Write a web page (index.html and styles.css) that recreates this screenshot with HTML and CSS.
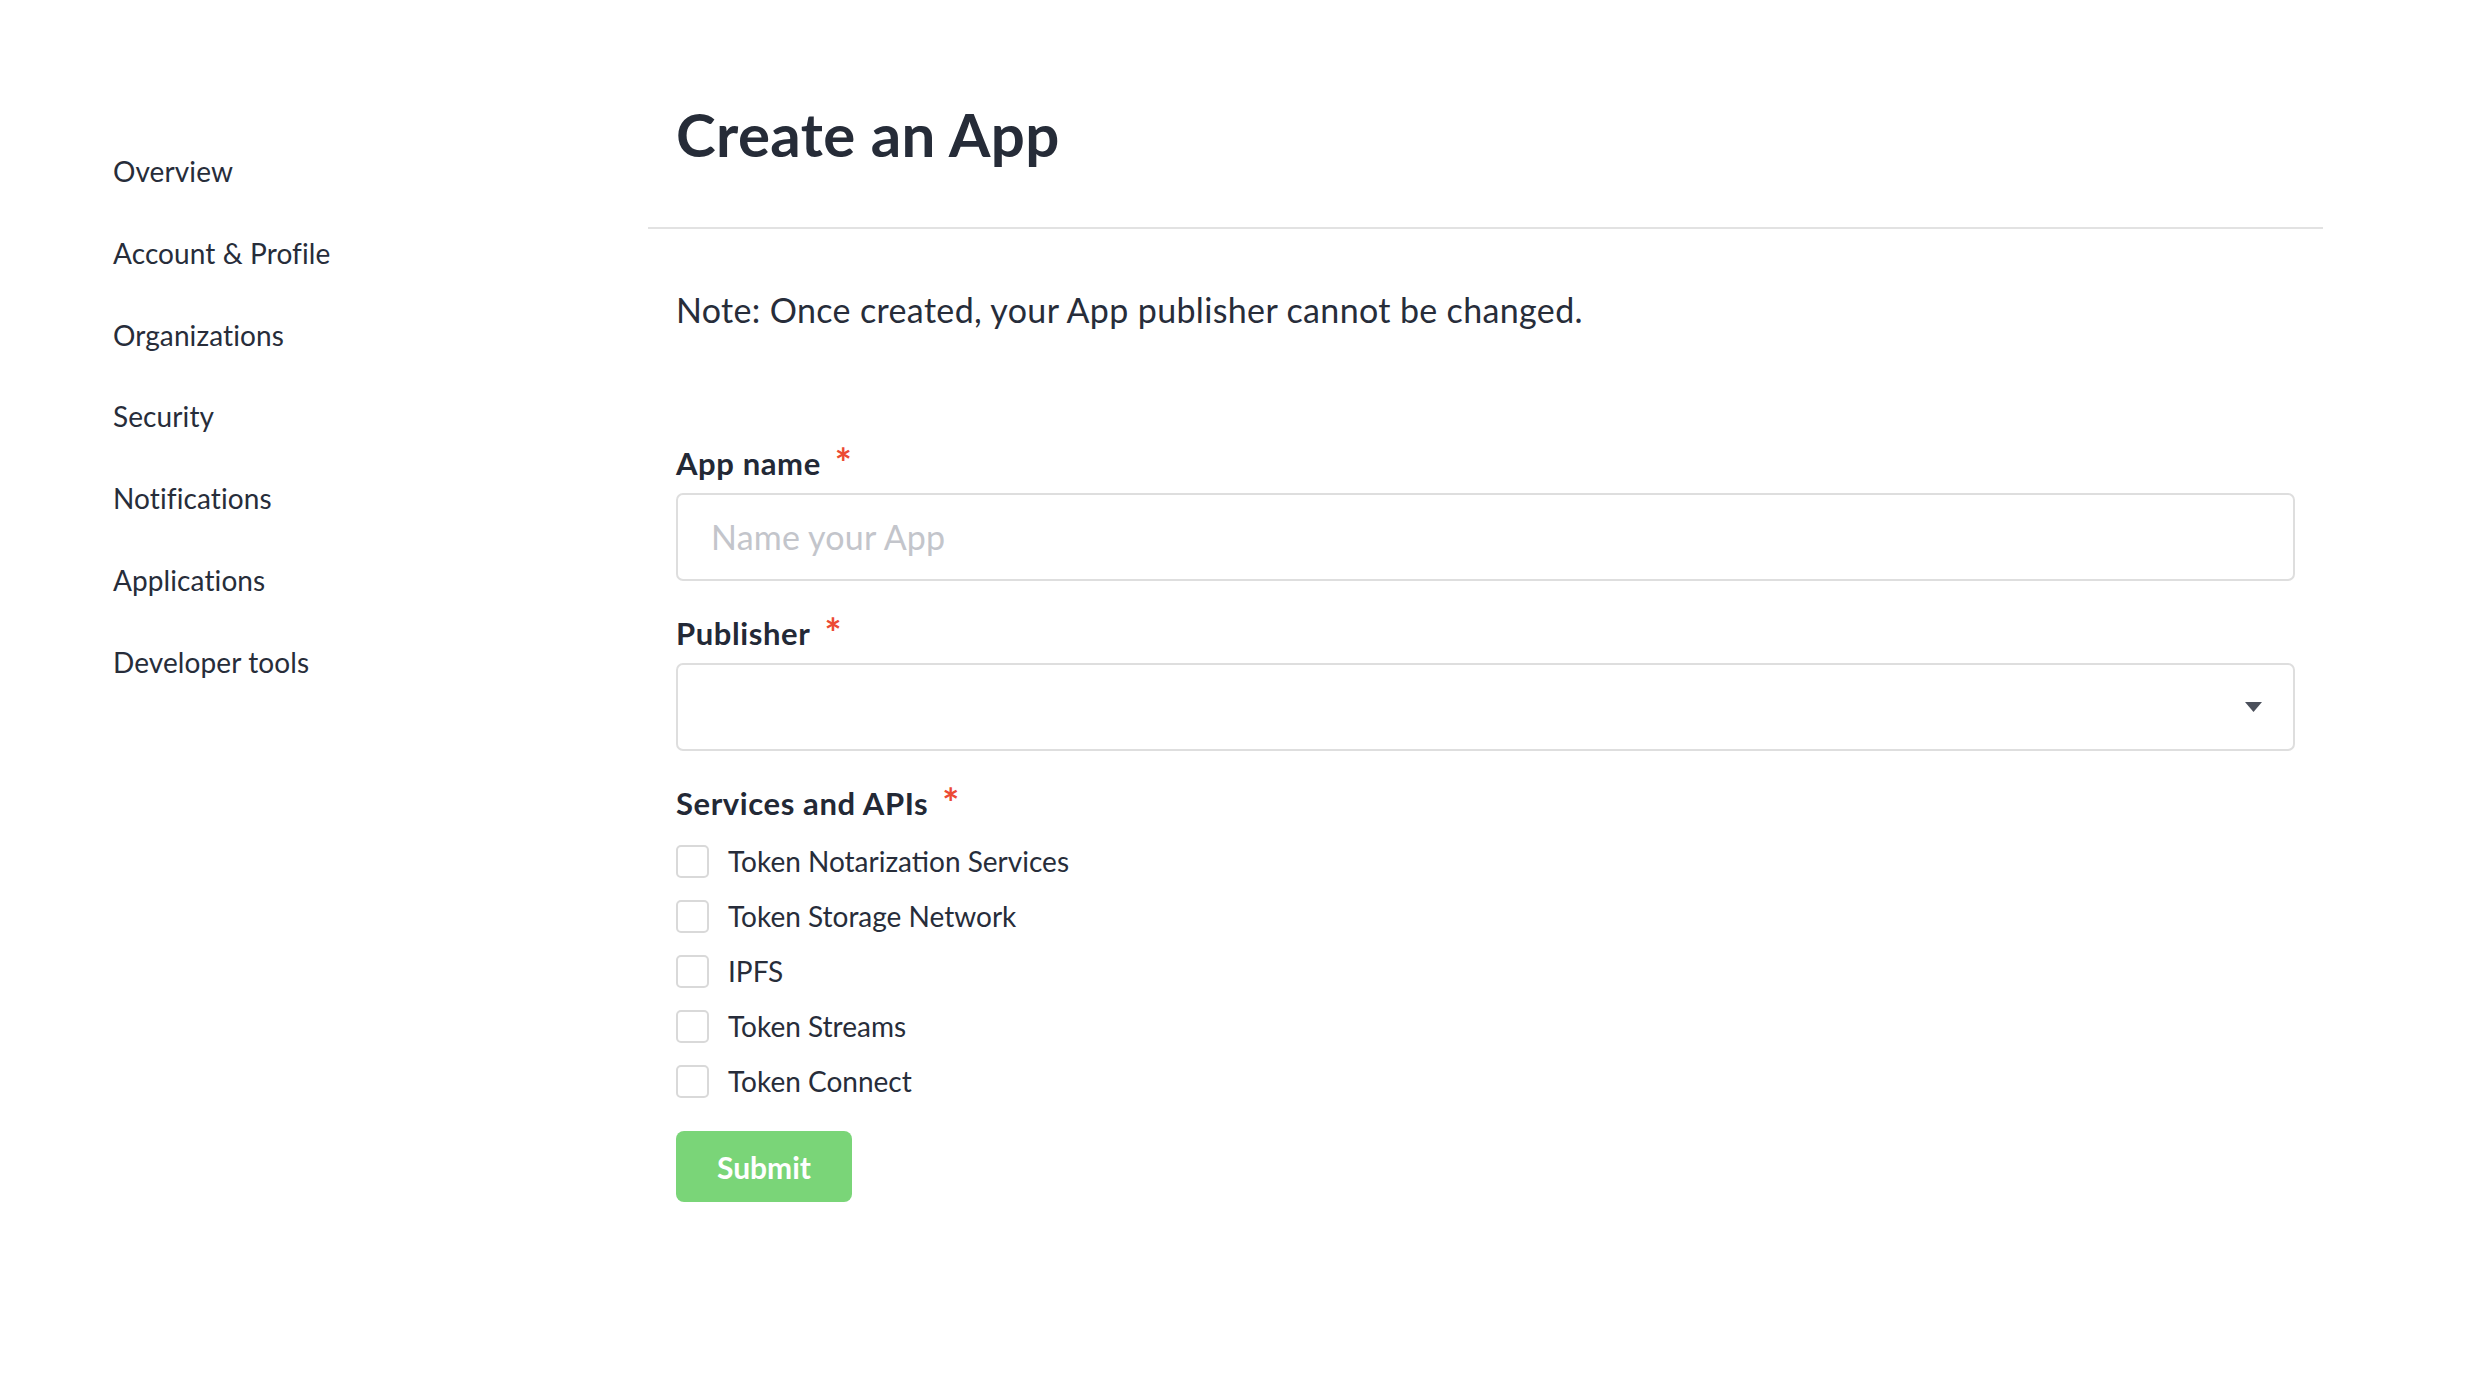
FILE: index.html
```html
<!DOCTYPE html>
<html lang="en">
<head>
<meta charset="utf-8">
<title>Create an App</title>
<link rel="stylesheet" href="styles.css">
</head>
<body>
<div class="page">
  <nav class="sidebar">
    <a class="nav-item">Overview</a>
    <a class="nav-item">Account &amp; Profile</a>
    <a class="nav-item">Organizations</a>
    <a class="nav-item">Security</a>
    <a class="nav-item">Notifications</a>
    <a class="nav-item">Applications</a>
    <a class="nav-item">Developer tools</a>
  </nav>
  <main class="main">
    <header class="header">
      <h1 class="title">Create an App</h1>
    </header>
    <p class="note">Note: Once created, your App publisher cannot be changed.</p>
    <form class="form">
      <label class="label label-first">App name<span class="req">*</span></label>
      <div class="field"><span class="placeholder">Name your App</span></div>
      <label class="label">Publisher<span class="req">*</span></label>
      <div class="field select">
        <svg class="caret" width="17" height="10" viewBox="0 0 17 10"><path d="M0 0 H17 L8.5 10 Z" fill="#4b505b"/></svg>
      </div>
      <label class="label">Services and APIs<span class="req">*</span></label>
      <div class="checks">
        <div class="check"><span class="box"></span><span class="check-text">Token Notarization Services</span></div>
        <div class="check"><span class="box"></span><span class="check-text">Token Storage Network</span></div>
        <div class="check"><span class="box"></span><span class="check-text">IPFS</span></div>
        <div class="check"><span class="box"></span><span class="check-text">Token Streams</span></div>
        <div class="check"><span class="box"></span><span class="check-text">Token Connect</span></div>
      </div>
      <div class="submit">Submit</div>
    </form>
  </main>
</div>
</body>
</html>
```
FILE: styles.css
```css
* { box-sizing: border-box; }
html, body { margin: 0; padding: 0; background: #ffffff; }
body {
  font-family: Lato, "Open Sans", sans-serif;
  color: #272d3a;
  width: 2466px;
  height: 1380px;
  overflow: hidden;
}
.page {
  display: flex;
  flex-direction: row;
}
.sidebar {
  flex: 0 0 648px;
  padding: 151px 0 0 113px;
  display: flex;
  flex-direction: column;
}
.nav-item {
  font-size: 28px;
  line-height: 40px;
  height: 40px;
  margin-bottom: 41.8px;
  color: #272d3a;
  letter-spacing: 0.1px;
}
.main {
  flex: 0 0 1675px;
  display: flex;
  flex-direction: column;
}
.header {
  padding: 98px 28px 57px;
  border-bottom: 2px solid #e2e2e2;
}
.title {
  margin: 0;
  font-size: 60px;
  line-height: 72px;
  font-weight: 700;
  letter-spacing: 0.4px;
  color: #262c38;
}
.note {
  margin: 57px 28px 0;
  font-size: 34px;
  line-height: 48px;
  letter-spacing: 0.35px;
  color: #272d3a;
}
.form {
  display: flex;
  flex-direction: column;
  padding: 0 28px;
}
.label {
  display: block;
  height: 40px;
  font-size: 31px;
  line-height: 40px;
  font-weight: 700;
  letter-spacing: 0.6px;
  color: #232936;
  margin-top: 32px;
  margin-bottom: 10px;
  white-space: nowrap;
}
.label-first { margin-top: 109px; }
.req {
  display: inline-block;
  vertical-align: top;
  font-size: 40px;
  line-height: 40px;
  font-weight: 700;
  color: #ec4a34;
  margin-left: 14px;
}
.field {
  height: 88px;
  border: 2px solid #dedede;
  border-radius: 7px;
  display: flex;
  align-items: center;
  padding: 0 33px;
}
.placeholder {
  font-size: 34px;
  line-height: 84px;
  letter-spacing: 0.2px;
  color: #c3c5cb;
}
.select {
  justify-content: flex-end;
  padding-right: 31px;
}
.caret { display: block; }
.checks {
  display: flex;
  flex-direction: column;
  gap: 22px;
  margin-top: 12px;
}
.check {
  display: flex;
  align-items: center;
  height: 33px;
  gap: 19px;
}
.box {
  width: 33px;
  height: 33px;
  border: 2px solid #d9d9d9;
  border-radius: 5px;
  flex: 0 0 33px;
}
.check-text {
  font-size: 28px;
  line-height: 33px;
  color: #272d3a;
}
.submit {
  margin-top: 33px;
  width: 176px;
  height: 71px;
  border-radius: 8px;
  background: #7ad578;
  color: #ffffff;
  font-size: 30px;
  font-weight: 700;
  display: flex;
  align-items: center;
  justify-content: center;
}
```
